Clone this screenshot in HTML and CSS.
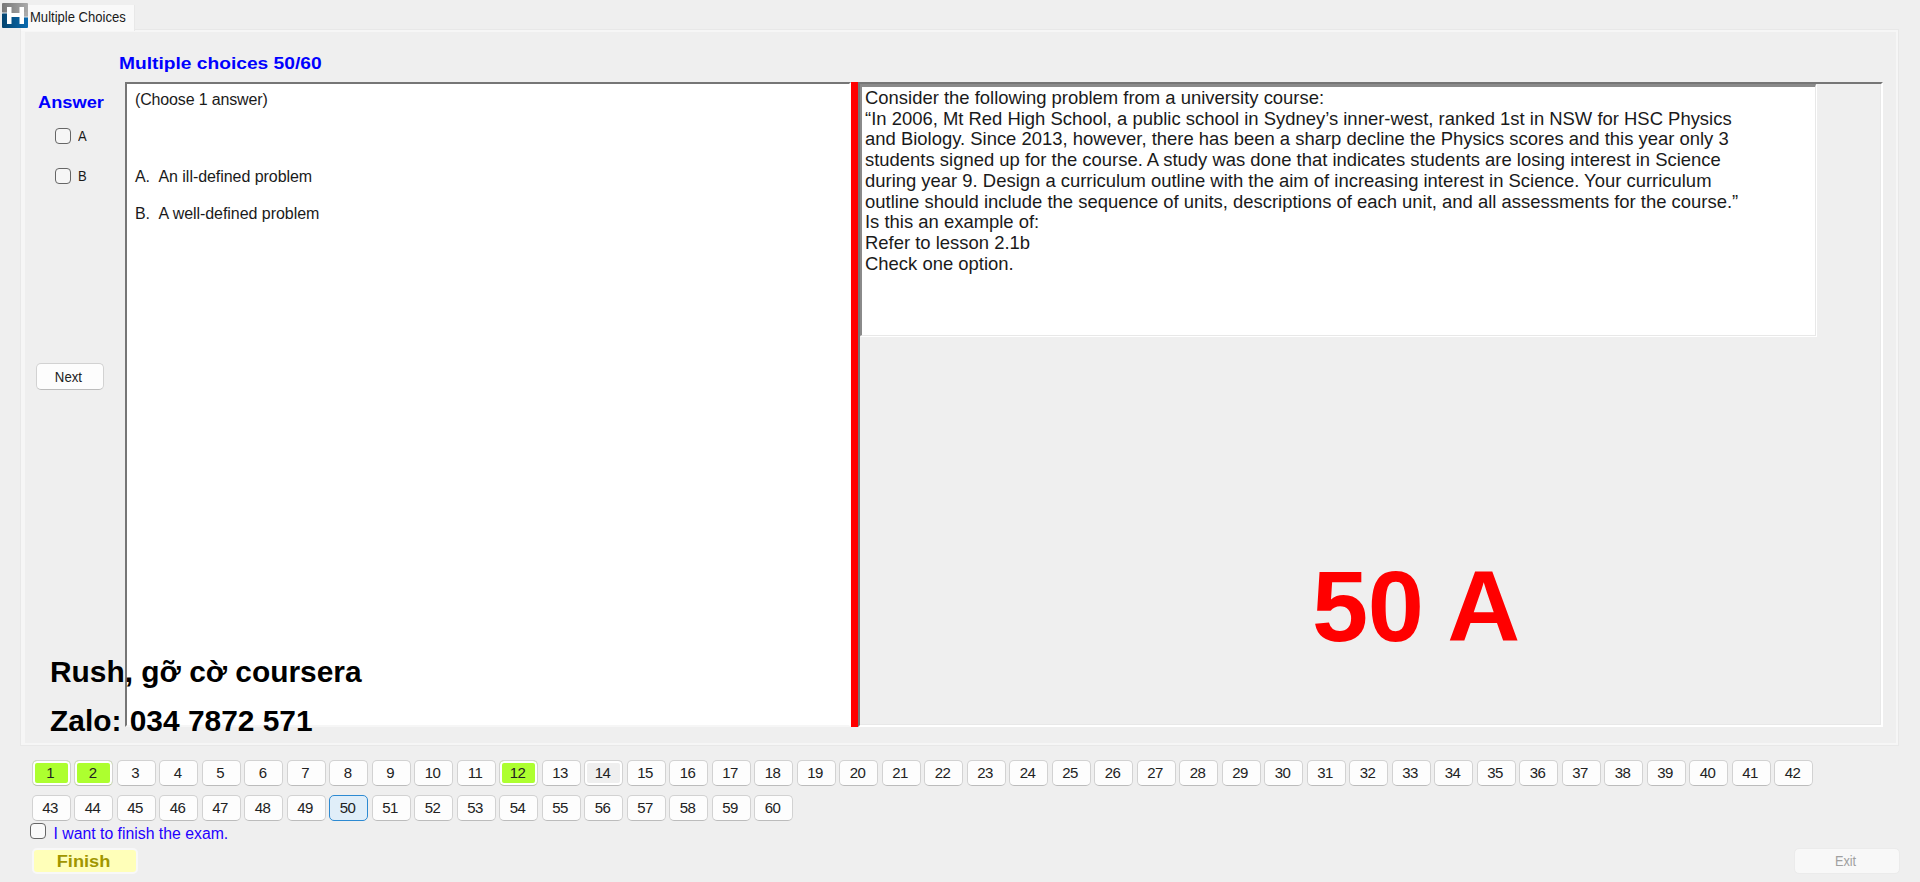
FILE: index.html
```
<!DOCTYPE html>
<html lang="en">
<head>
<meta charset="utf-8">
<title>Multiple Choices</title>
<link rel="stylesheet" href="styles.css">
</head>
<body>
<header class="tabs">
  <svg class="logo" viewBox="0 0 26 25">
    <defs>
      <linearGradient id="g" x1="0" x2="1"><stop offset="0" stop-color="#777"/><stop offset="1" stop-color="#aaa"/></linearGradient>
      <linearGradient id="b" x1="0" x2="1"><stop offset="0" stop-color="#04446f"/><stop offset="1" stop-color="#0a6bb0"/></linearGradient>
    </defs>
    <rect width="26" height="10" rx="1" fill="url(#g)"/>
    <rect y="10" width="26" height="15" rx="1" fill="url(#b)"/>
    <rect x="21" y="9" width="5" height="5" fill="#aaa"/>
    <path d="M5 4H9.5V10H17.5V4H22V21H17.5V14H9.5V21H5Z" fill="#fff"/>
    <path d="M0 10H5M22 14H26" stroke="#d8e2ea" stroke-width="1"/>
  </svg>
  <div class="tab"><span class="tab-text">Multiple Choices</span></div>
</header>
<main class="page">
  <h1 class="title"><span class="title-text">Multiple choices 50/60</span></h1>
  <div class="body">
    <aside class="answers">
      <div class="answers-head"><span class="answers-text">Answer</span></div>
      <label class="option"><i class="box"></i><span class="letter">A</span></label>
      <label class="option"><i class="box"></i><span class="letter">B</span></label>
      <button class="btn next"><span class="next-text">Next</span></button>
    </aside>
    <section class="choices">
      <p class="hint">(Choose 1 answer)</p>
      <p class="choice"><span class="mark">A.</span><span>An ill-defined problem</span></p>
      <p class="choice"><span class="mark">B.</span><span>A well-defined problem</span></p>
    </section>
    <div class="splitter"></div>
    <section class="question">
      <div class="question-text">Consider the following problem from a university course:<br>“In 2006, Mt Red High School, a public school in Sydney’s inner-west, ranked 1st in NSW for HSC Physics<br>and Biology. Since 2013, however, there has been a sharp decline the Physics scores and this year only 3<br>students signed up for the course. A study was done that indicates students are losing interest in Science<br>during year 9. Design a curriculum outline with the aim of increasing interest in Science. Your curriculum<br>outline should include the sequence of units, descriptions of each unit, and all assessments for the course.”<br>Is this an example of:<br>Refer to lesson 2.1b<br>Check one option.</div>
    </section>
  </div>
</main>
<nav class="numbers" id="numbers"></nav>
<label class="confirm"><i class="box"></i><span class="confirm-text">I want to finish the exam.</span></label>
<footer class="footer">
  <button class="btn finish"><span class="finish-text">Finish</span></button>
  <button class="btn exit"><span class="exit-text">Exit</span></button>
</footer>
<div class="overlay note note-one">Rush, gỡ cờ coursera</div>
<div class="overlay note note-two">Zalo: 034 7872 571</div>
<div class="overlay result">50 A</div>
<script src="script.js"></script>
</body>
</html>
```
FILE: styles.css
```
* { box-sizing: border-box; }
body {
  margin: 0;
  width: 1920px;
  height: 882px;
  overflow: hidden;
  position: relative;
  background: #efefef;
  color: #1a1a1a;
  font-family: "Liberation Sans", Arial, sans-serif;
}
p, h1 { margin: 0; }
i { font-style: normal; }
.tabs { display: flex; height: 29px; padding: 3px 0 0 2px; }
.logo { width: 26px; height: 25px; flex: none; position: relative; z-index: 1; }
.tab {
  width: 114px;
  height: 26px;
  margin: 2px 0 0 -7px;
  padding-left: 9px;
  background: #f9f9f9;
  border-right: 1px solid #e8e8e8;
  font-size: 14.5px;
  line-height: 24px;
  white-space: nowrap;
  position: relative;
}
.tab-text { display: inline-block; transform: scaleX(.9); transform-origin: left; }
.page {
  width: 1879px;
  height: 717px;
  margin-left: 20px;
  border: 1px solid #e8e8e8;
  box-shadow: inset 0 0 0 2px #f6f6f6, inset 2px 0 0 2px #f6f6f6;
  padding: 0 15px 0 4px;
}
.title { height: 52px; padding: 23px 0 0 94px; font-size: 16.5px; line-height: 21px; color: #00f; }
.title-text { display: inline-block; transform: scaleX(1.163); transform-origin: left; white-space: nowrap; }
.body { display: grid; grid-template-columns: 100px 726px 7px 1025px; height: 645px; }
.answers { padding: 12px 0 0 11px; }
.answers-head { margin-left: 2px; height: 34px; font-size: 16px; font-weight: bold; line-height: 18px; color: #00f; }
.answers-text { display: inline-block; transform: scaleX(1.14); transform-origin: left; }
.option { display: flex; height: 40px; padding-left: 18.5px; gap: 7.5px; }
.box { display: block; width: 16px; height: 16px; border: 1px solid #666; border-radius: 4px; background: #f6f6f6; flex: none; }
.letter { font-size: 15.5px; line-height: 15px; transform: scaleX(.84); transform-origin: left; }
.btn {
  display: block;
  padding: 0;
  font: 15px "Liberation Sans", Arial, sans-serif;
  color: #222;
  background: #fdfdfd;
  border: 1px solid #d2d2d2;
  border-bottom-color: #bcbcbc;
  border-radius: 5px;
  text-align: center;
}
.next { width: 68px; height: 27px; margin-top: 155px; padding-right: 3px; }
.next-text { display: inline-block; transform: scaleX(.88); }
.choices {
  background: #fff;
  border: 2px solid #fff;
  border-left-color: #767676;
  border-top-color: #767676;
  border-bottom-color: #f6f6f6;
  padding: 6px 0 0 8px;
  font-size: 16px;
  line-height: 20px;
  letter-spacing: -.15px;
}
.hint { margin-bottom: 57px; }
.choice { display: flex; margin-bottom: 17px; letter-spacing: -.05px; }
.mark { width: 23.5px; }
.splitter { background: #f00; height: 645px; }
.question {
  border: 2px solid #fff;
  border-left-color: #767676;
  border-top-color: #767676;
  box-shadow: inset -1px -1px #e8e8e8;
}
.question-text {
  width: 956px;
  height: 252px;
  padding: 1px 0 0 3px;
  background: #fff;
  border: 2px solid #8a8a8a;
  border-top-width: 3px;
  border-right: 1px solid #e8e8e8;
  border-bottom: 1px solid #e8e8e8;
  box-shadow: 1px 1px #fff;
  font-size: 18.45px;
  line-height: 20.7px;
  white-space: nowrap;
}
.numbers { display: grid; grid-template-columns: repeat(42, 42.5px); grid-auto-rows: 35px; height: 75px; padding: 14px 0 0 31.5px; }
.num { width: 39px; height: 26px; letter-spacing: -.6px; padding: 0 2px 2px 0; }
.num.done { background: #adff2f; box-shadow: inset 0 0 0 2px #fff; }
.num.seen { background: #efefef; box-shadow: inset 0 0 0 2px #fff; }
.num.current { background: #e0eef9; border: 1.5px solid #2d8ad2; }
.confirm { display: flex; gap: 7.5px; height: 28px; margin-top: 2px; padding-left: 30px; }
.confirm .box { background: #fafafa; }
.confirm-text { color: #1f00ff; font-size: 15.8px; line-height: 22px; white-space: nowrap; }
.footer { display: flex; justify-content: space-between; padding: 0 20px 0 32px; margin-top: -3px; }
.finish { width: 106px; height: 26px; background: #ffffb9; border: 2px solid #f8f8f8; color: #a09600; font-size: 16px; font-weight: bold; padding: 2px 3px 0 0; }
.finish-text { display: inline-block; transform: scaleX(1.14); }
.exit { width: 106px; height: 26px; color: #a0a0a0; background: #f8f8f8; border-color: #ebebeb; padding: 0 2px 2px 0; }
.exit-text { display: inline-block; transform: scaleX(.85); }
.overlay { position: absolute; font-weight: bold; white-space: nowrap; }
.note { color: #000; font-size: 29.9px; line-height: 34px; }
.note-one { left: 50px; top: 655px; }
.note-two { left: 50px; top: 704px; }
.result { left: 1312px; top: 556px; color: #f00; font-size: 101px; line-height: 100px; letter-spacing: -.5px; }
```
FILE: script.js
```
const numbers = document.getElementById('numbers');
const states = { 1: 'done', 2: 'done', 12: 'done', 14: 'seen', 50: 'current' };
for (let n = 1; n <= 60; n++) {
  const b = document.createElement('button');
  b.className = 'btn num ' + (states[n] || '');
  b.textContent = n;
  numbers.appendChild(b);
}
```
